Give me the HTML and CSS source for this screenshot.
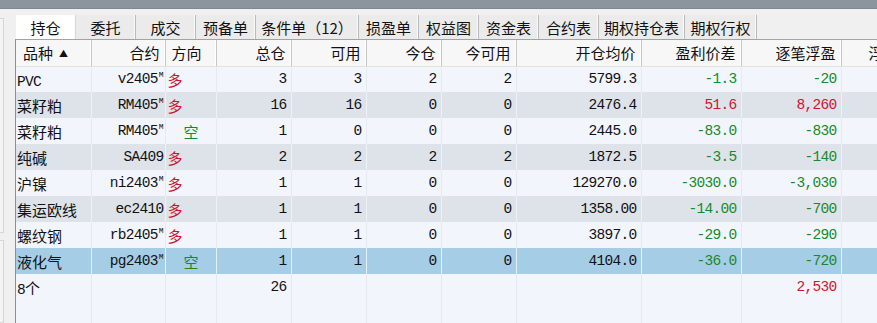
FILE: index.html
```html
<!DOCTYPE html>
<html>
<head>
	<meta charset="utf-8">
	<title>持仓</title>
	<link rel="stylesheet" href="styles.css">
</head>
<body>

<div class="topbar"></div>

<div class="main">
	<div class="side">
		<div class="side-box upper"></div>
		<div class="side-box lower"></div>
	</div>

	<div class="panel">
		<div class="tabs">
			<span class="tab active">持仓</span>
			<span class="tab">委托</span>
			<span class="tab">成交</span>
			<span class="tab">预备单</span>
			<span class="tab tab-wide">条件单（12）</span>
			<span class="tab">损盈单</span>
			<span class="tab">权益图</span>
			<span class="tab">资金表</span>
			<span class="tab">合约表</span>
			<span class="tab tab-md">期权持仓表</span>
			<span class="tab tab-sm">期权行权</span>
		</div>

		<div class="grid">
			<table>
				<colgroup>
					<col class="c-name">
					<col class="c-code">
					<col class="c-dir">
					<col class="c-qty">
					<col class="c-qty">
					<col class="c-qty">
					<col class="c-qty">
					<col class="c-price">
					<col class="c-pl">
					<col class="c-pl">
					<col class="c-last">
				</colgroup>
				<thead>
					<tr>
						<th class="left">品种<span class="sort">▲</span></th>
						<th>合约</th>
						<th class="left">方向</th>
						<th>总仓</th>
						<th>可用</th>
						<th>今仓</th>
						<th>今可用</th>
						<th>开仓均价</th>
						<th>盈利价差</th>
						<th>逐笔浮盈</th>
						<th class="left cut">浮动盈亏</th>
					</tr>
				</thead>
				<tbody>
					<tr class="odd">
						<td class="name"><span class="n">PVC</span></td>
						<td class="code n">v2405<sup class="m">M</sup></td>
						<td class="dir long">多</td>
						<td class="n">3</td><td class="n">3</td><td class="n">2</td><td class="n">2</td>
						<td class="n">5799.3</td>
						<td class="n down">-1.3</td>
						<td class="n down">-20</td>
						<td></td>
					</tr>
					<tr class="even">
						<td class="name">菜籽粕</td>
						<td class="code n">RM405<sup class="m">M</sup></td>
						<td class="dir long">多</td>
						<td class="n">16</td><td class="n">16</td><td class="n">0</td><td class="n">0</td>
						<td class="n">2476.4</td>
						<td class="n up">51.6</td>
						<td class="n up">8,260</td>
						<td></td>
					</tr>
					<tr class="odd">
						<td class="name">菜籽粕</td>
						<td class="code n">RM405<sup class="m">M</sup></td>
						<td class="dir short">空</td>
						<td class="n">1</td><td class="n">0</td><td class="n">0</td><td class="n">0</td>
						<td class="n">2445.0</td>
						<td class="n down">-83.0</td>
						<td class="n down">-830</td>
						<td></td>
					</tr>
					<tr class="even">
						<td class="name">纯碱</td>
						<td class="code n">SA409</td>
						<td class="dir long">多</td>
						<td class="n">2</td><td class="n">2</td><td class="n">2</td><td class="n">2</td>
						<td class="n">1872.5</td>
						<td class="n down">-3.5</td>
						<td class="n down">-140</td>
						<td></td>
					</tr>
					<tr class="odd">
						<td class="name">沪镍</td>
						<td class="code n">ni2403<sup class="m">M</sup></td>
						<td class="dir long">多</td>
						<td class="n">1</td><td class="n">1</td><td class="n">0</td><td class="n">0</td>
						<td class="n">129270.0</td>
						<td class="n down">-3030.0</td>
						<td class="n down">-3,030</td>
						<td></td>
					</tr>
					<tr class="even">
						<td class="name">集运欧线</td>
						<td class="code n">ec2410</td>
						<td class="dir long">多</td>
						<td class="n">1</td><td class="n">1</td><td class="n">0</td><td class="n">0</td>
						<td class="n">1358.00</td>
						<td class="n down">-14.00</td>
						<td class="n down">-700</td>
						<td></td>
					</tr>
					<tr class="odd">
						<td class="name">螺纹钢</td>
						<td class="code n">rb2405<sup class="m">M</sup></td>
						<td class="dir long">多</td>
						<td class="n">1</td><td class="n">1</td><td class="n">0</td><td class="n">0</td>
						<td class="n">3897.0</td>
						<td class="n down">-29.0</td>
						<td class="n down">-290</td>
						<td></td>
					</tr>
					<tr class="selected">
						<td class="name">液化气</td>
						<td class="code n">pg2403<sup class="m">M</sup></td>
						<td class="dir short">空</td>
						<td class="n">1</td><td class="n">1</td><td class="n">0</td><td class="n">0</td>
						<td class="n">4104.0</td>
						<td class="n down">-36.0</td>
						<td class="n down">-720</td>
						<td></td>
					</tr>
					<tr class="odd total">
						<td class="name"><span class="n">8</span>个</td>
						<td></td>
						<td></td>
						<td class="n">26</td>
						<td></td><td></td><td></td><td></td><td></td>
						<td class="n up">2,530</td>
						<td></td>
					</tr>
					<tr class="odd filler">
						<td></td><td></td><td></td><td></td><td></td><td></td>
						<td></td><td></td><td></td><td></td><td></td>
					</tr>
				</tbody>
			</table>
		</div>
	</div>
</div>

</body>
</html>
```

FILE: styles.css
```css
* {
	box-sizing: border-box;
}

body {
	margin: 0;
	width: 877px;
	height: 323px;
	overflow: hidden;
	background: #f0f0f0;
	font-family: "Noto Sans CJK SC", sans-serif;
	color: #111;
}

/* Dark strip along the top */
.topbar {
	height: 9px;
	background: #8c959e;
	border-bottom: 1px solid #7f8891;
}

.main {
	display: flex;
	height: 314px;
}

/* Small docked panel on the left */
.side {
	width: 15px;
	flex: none;
	padding-top: 9px;
	display: flex;
	flex-direction: column;
	gap: 7px;
}

.side-box {
	width: 4px;
	border: 1px solid #d6d6d6;
	border-left: none;
	background: #f4f4f4;
}

.side-box.upper {
	height: 215px;
}

.side-box.lower {
	flex: 1;
}

.panel {
	flex: 1;
	min-width: 0;
	overflow: hidden;
	padding-top: 6px;
	display: flex;
	flex-direction: column;
}

/* Tab strip */
.tabs {
	display: flex;
	height: 24px;
	padding-left: 1px;
	flex: none;
}

.tab {
	width: 60px;
	flex: none;
	display: flex;
	align-items: center;
	justify-content: center;
	font-size: 15px;
	line-height: 1;
	background: #ebebeb;
	border-right: 1px solid #b9b9b9;
	box-shadow: inset -1px 0 0 #fafafa;
}

.tab.active {
	background: #fff;
	border-right-color: #d8d8d8;
}

.tab-wide {
	width: 103px;
}

.tab-md {
	width: 86px;
}

.tab-sm {
	width: 72px;
}

/* Position grid */
.grid {
	flex: 1;
	border-top: 1px solid #a3a3a3;
	border-left: 1px solid #8f8f8f;
	background: #f2f6fc;
	overflow: hidden;
}

table {
	table-layout: fixed;
	border-collapse: collapse;
	width: 950px;
}

col.c-name { width: 75px; }
col.c-code { width: 74px; }
col.c-dir { width: 51px; }
col.c-qty { width: 75px; }
col.c-price { width: 125px; }
col.c-pl { width: 100px; }
col.c-last { width: 125px; }

th {
	height: 26px;
	padding: 0 5px 0 0;
	text-align: right;
	font-weight: normal;
	font-size: 15px;
	white-space: nowrap;
	background: #f7f7f7;
	border-right: 1px solid #c6c6c6;
	box-shadow: inset -1px 0 0 #fff;
	border-bottom: 1px solid #e2e2e2;
}

th.left {
	text-align: left;
	padding-left: 6px;
}

th:first-child {
	padding-left: 7px;
}

th.cut {
	padding-left: 27px;
}

.sort {
	font-size: 9px;
	margin-left: 6px;
	vertical-align: 2px;
}

td {
	height: 26px;
	padding: 0 4px 0 0;
	text-align: right;
	font-size: 15px;
	white-space: nowrap;
	border-right: 1px solid #e6eaf0;
}

tr.odd td {
	background: #f2f6fc;
}

tr.even td {
	background: #dee3ea;
	border-right-color: #eef1f5;
}

tr.selected td {
	background: #a5cde6;
	border-right-color: #e4f0f8;
}

tr.filler td {
	height: 30px;
}

td.name {
	text-align: left;
	padding-left: 1px;
}

td.code {
	padding-right: 1px;
}

td.dir {
	text-align: left;
	padding-left: 2px;
}

td.dir.short {
	padding-left: 18px;
}

/* Numbers use a narrow serif mono face */
.n {
	font-family: "Liberation Mono", monospace;
	font-size: 14.5px;
	letter-spacing: -0.7px;
}

.m {
	font-size: 8px;
	letter-spacing: 0;
	vertical-align: 6px;
	line-height: 0;
	margin-left: 1px;
}

.long,
.up {
	color: #d0132e;
}

.short,
.down {
	color: #18892a;
}
```
